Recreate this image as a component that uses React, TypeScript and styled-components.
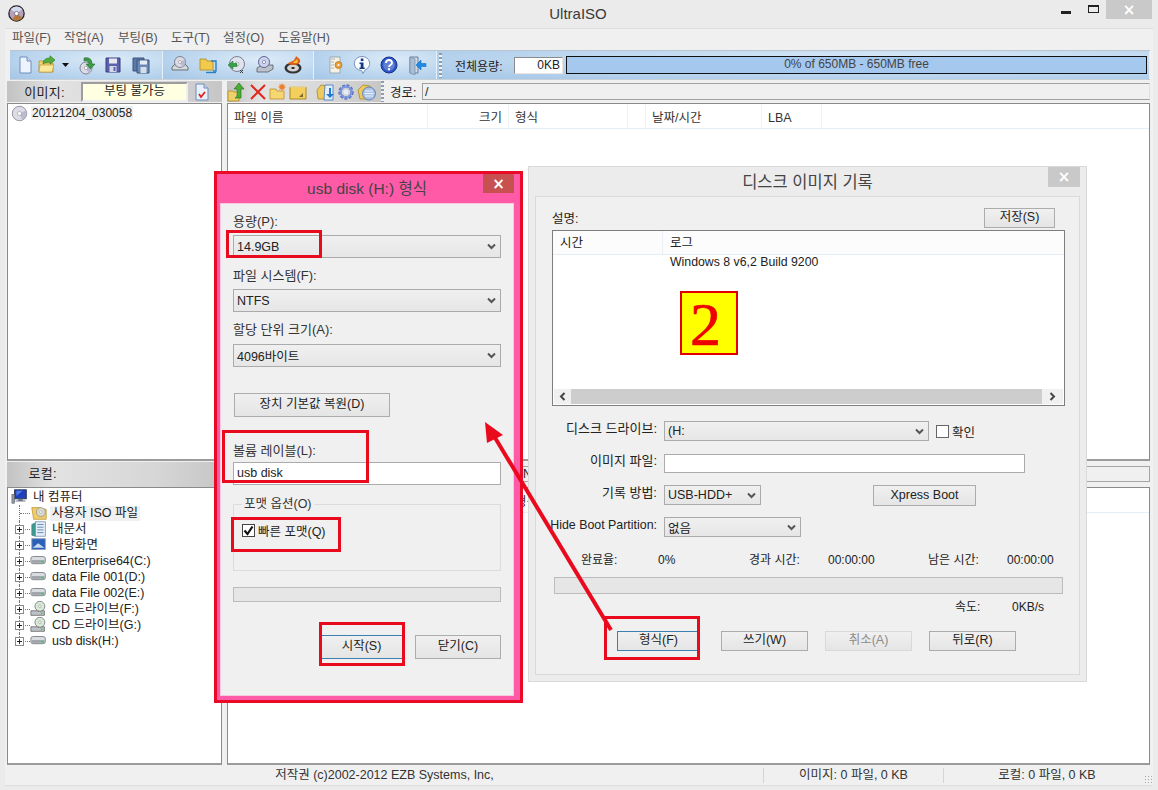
import React from "react";
import styled, { createGlobalStyle } from "styled-components";

const Global = createGlobalStyle`
  html, body { margin: 0; padding: 0; background: #ebebeb; }
  body { font-family: "Liberation Sans", "Noto Sans CJK KR", sans-serif; font-size: 13px; color: #222; }
  * { box-sizing: border-box; }
`;

const Page = styled.div`
  position: relative; width: 1158px; height: 790px; overflow: hidden;
  background: #ebebeb; display: flex; flex-direction: column;
`;

/* ---------- title bar ---------- */
const TitleBar = styled.header`
  height: 28px; display: grid; grid-template-columns: 1fr auto 1fr; padding: 0 6px 0 4px; flex: none;
`;
const TitleIconBox = styled.div` padding: 5px 0 0 4px; line-height: 0; `;
const TitleText = styled.div` font-size: 15px; line-height: 27px; color: #3a3a3a; `;
const WinControls = styled.div` display: flex; justify-content: flex-end; align-items: flex-start; `;
const MinBtn = styled.div` width: 10px; height: 3px; background: #222; margin: 11px 17px 0 0; `;
const MaxBtn = styled.div` width: 11px; height: 8px; border: 1px solid #222; border-top-width: 2px; margin: 5px 7px 0 0; `;
const CloseBtn = styled.div<{ $w: number; $h: number; $bg: string }>`
  width: ${p => p.$w}px; height: ${p => p.$h}px; background: ${p => p.$bg};
  color: #fff; display: flex; align-items: center; justify-content: center;
  font: bold 15px "DejaVu Sans", sans-serif; flex: none;
`;

/* ---------- frame ---------- */
const Frame = styled.main`
  flex: 1; margin: 0 5px 5px; background: #f0f0f0; border-top: 1px solid #dedede;
  display: flex; flex-direction: column; box-shadow: 0 1px 0 #dcdcdc;
`;
const MenuBar = styled.nav` height: 20px; display: flex; flex: none; padding-left: 7px; `;
const MenuItem = styled.div<{ $w: number }>` width: ${p => p.$w}px; line-height: 19px; font-size: 12.5px; color: #555; `;

const Toolbar = styled.div`
  height: 30px; margin: 1px 3px 0 5px; display: flex; flex: none;
  border-top: 1px solid #b9c6d2; border-bottom: 1px solid #c8d0d8; background: #b9d4ee;
`;
const ToolSection = styled.div<{ $w?: number; $pad: number }>`
  ${p => p.$w ? `width:${p.$w}px;flex:none;` : "flex:1;"}
  padding-left: ${p => p.$pad}px; display: flex; align-items: center; border-right: 1px solid #e8f0f7;
  background: radial-gradient(ellipse at 65% 30%, #dcebf7 0, #c2daf0 45%, #a4c6e7 100%);
`;
const Slot = styled.div<{ $w: number }>`
  width: ${p => p.$w}px; flex: none; display: flex; align-items: center; justify-content: center; line-height: 0;
`;
const Grip = styled.div<{ $h: number }>`
  width: 3px; height: ${p => p.$h}px; flex: none;
  background: repeating-linear-gradient(180deg, #8f9cab 0 2px, #eef3f8 2px 4px);
`;
const CapLabel = styled.div` margin-left: 13px; font-size: 12px; color: #222; width: 59px; white-space: nowrap; `;
const CapValue = styled.div`
  width: 49px; height: 17px; background: #fff; border: 1px solid #8b8b8b; border-right-color: #e6e6e6; border-bottom-color: #e6e6e6;
  text-align: right; font-size: 12px; line-height: 15px; padding-right: 2px; color: #222;
`;
const CapBar = styled.div`
  flex: 1; height: 18px; margin: 0 2px 0 3px; background: #a5c8ee; border: 1px solid #111;
  text-align: center; font-size: 12px; line-height: 14px; color: #444;
`;

const InfoRow = styled.div<{ $h: number; $mt: number }>`
  height: ${p => p.$h}px; margin-top: ${p => p.$mt}px; flex: none; display: grid; grid-template-columns: 215px 1fr; column-gap: 5px; padding: 0 3px 0 2px;
`;
const GrayBar = styled.div<{ $w?: number }>`
  ${p => p.$w ? `width:${p.$w}px;flex:none;` : ""}
  background: linear-gradient(90deg, #c2c2c2 0, #e2e2e2 22%, #d6d6d6 70%, #c6c6c6 100%);
  display: flex; align-items: center; height: 100%;
`;
const BarLabel = styled.div<{ $w: number; $pb?: number }>`
  width: ${p => p.$w}px; flex: none; text-align: right; font-size: 13px; color: #222; letter-spacing: .3px; padding: 0 4px ${p => p.$pb ?? 0}px 0;
`;
const BootBox = styled.div`
  width: 107px; height: 20px; flex: none; margin-left: 12px; background: #ffffe1; border: 2px solid #9d9d9d; border-right-color: #eee; border-bottom-color: #eee;
  text-align: center; font-size: 12.5px; line-height: 14px; color: #222;
`;
const RightRow = styled.div` display: flex; align-items: center; height: 100%; `;
const PathLabel = styled.div` margin-left: 6px; font-size: 12.5px; width: 32px; flex: none; color: #222; `;
const PathField = styled.div`
  flex: 1; height: 17px; border: 1px solid #a0a0a0; border-right-color: #e0e0e0; background: #f0f0f0; font-size: 12.5px; line-height: 16px; padding-left: 2px; color: #222;
`;
const PlainPath = styled.div`
  height: 16px; margin-top: 4px; border: 1px solid #a5a5a5; border-left: none; background: #f0f0f0; padding-left: 296px; font: 12px/15px "Liberation Sans", sans-serif;
`;

const PaneRow = styled.section<{ $h: number; $mt: number }>`
  height: ${p => p.$h}px; margin-top: ${p => p.$mt}px; flex: none; display: grid; grid-template-columns: 215px 1fr; column-gap: 5px; padding: 0 3px 0 2px;
`;
const Pane = styled.div`
  background: #fff; border-top: 1px solid #8a8a8a; border-left: 1px solid #8a8a8a; border-bottom: 2px solid #9b9b9b; border-right: 1px solid #8a8a8a; overflow: hidden;
`;
const DiscRow = styled.div` display: flex; align-items: center; height: 17px; padding: 1px 0 0 3px; `;
const Highlight = styled.span`
  background: #f0f0f0; margin-left: 3px; padding: 0 1px; font-size: 12px; line-height: 14px; color: #222; white-space: nowrap;
`;
const ListHead = styled.div`
  display: flex; height: 25px; border-bottom: 1px solid #e6eef6; background: #fff;
`;
const HeadCell = styled.div<{ $w: number; $right?: boolean }>`
  width: ${p => p.$w}px; flex: none; padding: 6px 6px 2px; border-right: 1px solid #eef2f7; font-size: 12.5px; line-height: 16px; color: #333;
  text-align: ${p => p.$right ? "right" : "left"}; white-space: nowrap;
`;

/* ---------- tree ---------- */
const Tree = styled.div` padding-top: 1px; `;
const TreeRowBox = styled.div` display: flex; align-items: center; height: 16px; position: relative; `;
const Connector = styled.div<{ $last?: boolean }>`
  width: 22px; height: 16px; flex: none; position: relative;
  &::before { content: ""; position: absolute; left: 11px; top: 0; height: ${p => p.$last ? 8 : 16}px; border-left: 1px dotted #777; }
  &::after { content: ""; position: absolute; left: 12px; top: 8px; width: 10px; border-top: 1px dotted #777; }
`;
const Expander = styled.div`
  position: absolute; left: 7px; top: 4px; width: 9px; height: 9px; border: 1px solid #8a8a8a; background: #fff; z-index: 1;
  &::before { content: ""; position: absolute; left: 1px; top: 3px; width: 5px; height: 1px; background: #223; }
  &::after { content: ""; position: absolute; left: 3px; top: 1px; width: 1px; height: 5px; background: #223; }
`;
const TreeIconBox = styled.div` width: 18px; flex: none; line-height: 0; `;
const RootSpace = styled.div` width: 3px; flex: none; `;
const TreeLabel = styled.span<{ $sel?: boolean }>`
  margin-left: 2px; padding: 0 2px; font-size: 12.5px; line-height: 15px; color: #222; white-space: nowrap; background: ${p => p.$sel ? "#f0f0f0" : "transparent"};
`;

/* ---------- status ---------- */
const StatusBar = styled.footer`
  flex: 1; display: grid; grid-template-columns: 758px 180px 1fr; padding: 3px 3px 2px 1px; align-items: stretch;
`;
const StatusCell = styled.div<{ $sep?: boolean }>`
  text-align: center; font-size: 12.5px; line-height: 14px; color: #333; border-right: ${p => p.$sep ? "1px solid #d5d5d5" : "none"}; position: relative;
`;
const ResizeGrip = styled.div`
  position: absolute; right: -2px; bottom: 0; width: 8px; height: 8px;
  background: radial-gradient(circle, #aaa 0 1px, transparent 1px) 0 0 / 3px 3px;
`;

/* ---------- dialogs ---------- */
const FormatDialog = styled.div`
  position: absolute; left: 214px; top: 171px; width: 309px; height: 532px; background: #ff5aa8;
  border: 3px solid #ea0a28; padding: 0 6px 4px 3px; display: flex; flex-direction: column; z-index: 2;
`;
const DlgTitle = styled.div<{ $h: number }>`
  height: ${p => p.$h}px; flex: none; display: flex; align-items: flex-start; justify-content: flex-end; position: relative;
`;
const DlgCaption = styled.div<{ $left: number; $right: number; $top: number; $size: number }>`
  position: absolute; left: ${p => p.$left}px; right: ${p => p.$right}px; top: ${p => p.$top}px; text-align: center;
  font-size: ${p => p.$size}px; color: #444; white-space: nowrap;
`;
const FormatBody = styled.div`
  flex: 1; background: #f0f0f0; border: 1px solid #f7c9df; padding: 10px 12px 0 12px; display: flex; flex-direction: column; min-height: 0;
`;
const FieldLabel = styled.div<{ $mt?: number; $mb: number }>`
  margin-top: ${p => p.$mt ?? 0}px; margin-bottom: ${p => p.$mb}px; height: 16px; font-size: 13px; line-height: 16px; color: #333; white-space: nowrap;
`;
const SelectBox = styled.div<{ $w?: number; $h: number }>`
  ${p => p.$w ? `width:${p.$w}px;` : ""} height: ${p => p.$h}px; flex: none;
  border: 1px solid #ababab; background: linear-gradient(180deg, #f0f0f0, #e6e6e6);
  display: flex; align-items: center; justify-content: space-between; padding: 0 4px 0 3px; font-size: 12.5px; color: #222; white-space: nowrap;
`;
const Btn = styled.div<{ $w: number; $h: number; $ml?: number; $mt?: number; $focus?: boolean; $off?: boolean }>`
  width: ${p => p.$w}px; height: ${p => p.$h}px; flex: none; margin-left: ${p => p.$ml ?? 0}px; margin-top: ${p => p.$mt ?? 0}px;
  border: 1px solid ${p => p.$focus ? "#3c7fb1" : p.$off ? "#d9d9d9" : "#acacac"};
  background: linear-gradient(180deg, #f0f0f0, #e5e5e5);
  text-align: center; font-size: 12.5px; line-height: ${p => p.$h - 3}px; color: ${p => p.$off ? "#8c8c8c" : "#222"}; white-space: nowrap;
`;
const TextInput = styled.div<{ $w?: number; $h: number }>`
  ${p => p.$w ? `width:${p.$w}px;` : ""} height: ${p => p.$h}px; flex: none; background: #fff; border: 1px solid #ababab; padding-left: 3px;
  font-size: 12.5px; line-height: ${p => p.$h - 3}px; color: #222;
`;
const GroupBox = styled.fieldset`
  margin: 12px 0 0; padding: 0 0 0 8px; height: 74px; flex: none; border: 1px solid #dcdcdc; min-width: 0;
`;
const GroupLegend = styled.legend` font-size: 12.5px; color: #333; padding: 0 2px; margin-left: 0; line-height: 14px; `;
const CheckRow = styled.div` display: flex; align-items: center; margin-top: 10px; font-size: 12.5px; color: #222; `;
const CheckBox = styled.div`
  width: 13px; height: 13px; border: 1px solid #444; background: #fff; margin-right: 3px; line-height: 0; flex: none;
`;
const ProgressTrack = styled.div<{ $h: number; $mt: number; $ml?: number; $mr?: number }>`
  height: ${p => p.$h}px; margin: ${p => p.$mt}px ${p => p.$mr ?? 0}px 0 ${p => p.$ml ?? 0}px; flex: none; border: 1px solid #bcbcbc; background: #e6e6e6;
`;
const FormatButtons = styled.div` display: flex; justify-content: flex-end; gap: 12px; margin-top: 33px; `;

const BurnDialog = styled.div`
  position: absolute; left: 528px; top: 166px; width: 559px; height: 516px; background: #ececec;
  border: 1px solid #d9d9d9; padding: 0 6px 6px; display: flex; flex-direction: column; z-index: 1;
`;
const BurnBody = styled.div`
  flex: 1; background: #f0f0f0; border: 1px solid #dadada; display: flex; flex-direction: column; min-height: 0;
`;
const DescRow = styled.div`
  height: 33px; margin-left: 16px; margin-right: 24px; padding-top: 11px; display: flex; justify-content: space-between; font-size: 12.5px; color: #222; flex: none;
`;
const LogList = styled.div`
  height: 176px; margin: 0 14px 0 16px; flex: none; border: 1px solid #7e7e7e; background: #fff; display: flex; flex-direction: column;
`;
const LogHead = styled.div` height: 24px; flex: none; display: flex; border-bottom: 1px solid #e4edf6; background: #fcfcfc; `;
const LogHeadCell = styled.div<{ $w?: number }>`
  ${p => p.$w ? `width:${p.$w}px;border-right:1px solid #eaeff5;` : "flex:1;"} padding: 4px 7px 2px; font-size: 12.5px; line-height: 16px; color: #222;
`;
const LogBody = styled.div`
  flex: 1; padding: 0 0 0 117px; font-size: 12.3px; line-height: 15px; color: #222;
`;
const HScroll = styled.div`
  height: 15px; margin: 0 1px 1px; display: grid; grid-template-columns: 17px 1fr 21px; flex: none; background: #f0f0f0;
`;
const ScrollArrow = styled.div` display: flex; align-items: center; justify-content: center; line-height: 0; `;
const ScrollThumb = styled.div` background: #cdcdcd; `;
const FormGrid = styled.div`
  margin-top: 15px; display: grid; grid-template-columns: 121px 1fr; column-gap: 7px; row-gap: 12px; align-items: center; flex: none;
`;
const FormLabel = styled.div<{ $size?: number }>`
  text-align: right; font-size: ${p => p.$size ?? 13}px; color: #222; white-space: nowrap; line-height: 16px; padding-bottom: 4px;
`;
const FormCtl = styled.div<{ $gap?: number }>` display: flex; align-items: center; height: 20px; gap: ${p => p.$gap ?? 0}px; `;
const SmallCheck = styled.div` width: 13px; height: 13px; border: 1px solid #666; background: #fff; flex: none; `;
const SmallCheckLabel = styled.span` font-size: 12.5px; color: #222; margin-left: -4px; `;
const StatsRow = styled.div`
  margin-top: 15px; height: 16px; padding-left: 45px; display: grid; grid-template-columns: 77px 91px 79px 100px 79px 1fr; font-size: 12px; line-height: 16px; color: #222; flex: none; white-space: nowrap;
`;
const SpeedRow = styled.div`
  margin-top: 5px; height: 16px; padding-left: 419px; display: grid; grid-template-columns: 57px 1fr; font-size: 12px; line-height: 16px; color: #222; flex: none;
`;
const BurnButtons = styled.div` display: flex; margin-top: 16px; padding-left: 81px; flex: none; `;

/* ---------- annotations ---------- */
const RedRect = styled.div<{ $x: number; $y: number; $w: number; $h: number }>`
  position: absolute; left: ${p => p.$x}px; top: ${p => p.$y}px; width: ${p => p.$w}px; height: ${p => p.$h}px;
  border: 3px solid #ea0a1e; z-index: 3; pointer-events: none;
`;
const NumberBadge = styled.div`
  position: absolute; left: 680px; top: 291px; width: 58px; height: 64px; background: #ffff00; border: 2px solid #e00000;
  color: #ee0000; font: 62px/62px "Liberation Serif", serif; text-align: center; padding-right: 7px; z-index: 3;
  -webkit-text-stroke: .7px #ee0000;
`;
const ArrowLayer = styled.svg`
  position: absolute; left: 0; top: 0; width: 1158px; height: 790px; z-index: 4; pointer-events: none;
`;

/* ---------- icons ---------- */
type IP = { children: React.ReactNode; s?: number };
const I = ({ children, s = 20 }: IP) => <svg width={s} height={s} viewBox="0 0 20 20">{children}</svg>;
const Folder = ({ c = "#f3d36b" }: { c?: string }) => (
  <g><path d="M2 6h6l1 2h7v9H2z" fill={c} stroke="#b8922c" strokeWidth=".8" /><path d="M3 10h14l-2 7H2z" fill="#fbe89c" stroke="#b8922c" strokeWidth=".6" /></g>
);
const Disc = ({ cx = 10, cy = 10, r = 7 }: { cx?: number; cy?: number; r?: number }) => (
  <g><circle cx={cx} cy={cy} r={r} fill="#dcdce6" stroke="#6c6c7c" strokeWidth=".8" /><path d={`M${cx} ${cy}L${cx + r * .9} ${cy - r * .4}A${r} ${r} 0 0 1 ${cx + r * .4} ${cy + r * .9}Z`} fill="#b9b9d2" /><circle cx={cx} cy={cy} r={r * .28} fill="#fff" stroke="#888" strokeWidth=".6" /></g>
);
const Drive = ({ y = 11 }: { y?: number }) => (
  <g><path d={`M2 ${y + 1}l3-3h10l3 3v3H2z`} fill="#c4c8cf" stroke="#5e6268" strokeWidth=".8" /><path d={`M3 ${y + 2}h14`} stroke="#eef0f3" /></g>
);
const GreenArrow = () => <path d="M6 9C6 4 10 3 13 3V0.8L18 5l-5 4.2V7C10 7 8 8 6 9z" fill="#52ad3c" stroke="#2c7a20" strokeWidth=".6" />;

const IconNew = () => <I><path d="M5 2h7l4 4v12H5z" fill="#eef4fd" stroke="#6f8dbd" /><path d="M12 2v4h4" fill="#cfdcf0" stroke="#6f8dbd" /></I>;
const IconOpen = () => <I><Folder /><GreenArrow /></I>;
const IconExtract = () => <I><Disc cx={9} cy={13} r={6} /><path d="M7 3c5-1 8 1 8 6h3l-4.5 5L9 9h3c0-2-2-4-5-3z" fill="#3f9a46" stroke="#1f6c2a" strokeWidth=".6" /></I>;
const IconSave = () => <I><path d="M3 3h14v14H3z" fill="#5b62ad" stroke="#3a3f80" /><rect x="6" y="3.500" width="8" height="5" fill="#e8e8f2" /><rect x="6.500" y="11" width="7" height="6" fill="#d6d8e8" /><rect x="10.500" y="12" width="2" height="4" fill="#5b62ad" /></I>;
const IconSaveAll = () => <I><path d="M2 3h11v13H2z" fill="#5c7aa8" stroke="#3d557c" /><path d="M6 5h12v13H6z" fill="#6a88b8" stroke="#3d557c" /><rect x="9" y="5.500" width="7" height="4" fill="#e6ecf4" /><rect x="9.500" y="12" width="6" height="6" fill="#d6dee8" /></I>;
const IconDriveDisc = () => <I><Drive y={11} /><Disc cx={10} cy={7} r={5.500} /></I>;
const IconFolderScreen = () => <I><path d="M2 4h6l1 2h6v9H2z" fill="#f1c94d" stroke="#a98a25" strokeWidth=".8" /><path d="M13 6h5v10h-3" fill="none" stroke="#2a7fc4" strokeWidth="1.400" /><path d="M8 17.500h10" stroke="#2a7fc4" strokeWidth="1.400" /></I>;
const IconGlobeDisc = () => <I><circle cx="10" cy="9" r="7.500" fill="#dfe3ee" stroke="#667" strokeWidth=".8" /><circle cx="10" cy="9" r="2" fill="#fff" stroke="#888" strokeWidth=".6" /><path d="M1 10l5-4v2.500h4v3H6V14z" fill="#38a24a" stroke="#1f6e2b" strokeWidth=".5" /><path d="M13 15l3 3m-3 0l3-3" stroke="#333" /></I>;
const IconScanner = () => <I><path d="M2 13l5-3h11v4l-5 3H2z" fill="#bcc2cc" stroke="#555a63" strokeWidth=".8" /><circle cx="9" cy="7" r="5.500" fill="#cfd4ee" stroke="#54598c" strokeWidth=".9" /><circle cx="9" cy="7" r="1.600" fill="#fff" stroke="#54598c" strokeWidth=".6" /></I>;
const IconBurn = () => <I><ellipse cx="10" cy="13" rx="8.500" ry="5.500" fill="#333" /><ellipse cx="10" cy="13" rx="6" ry="3.500" fill="#d5d5d5" /><ellipse cx="10" cy="13" rx="1.800" ry="1.100" fill="#222" /><path d="M5 9c1-3 5-2 6-4 1-2 2-3 2-4 2 2 5 3 4 6-1 3-6 4-12 2z" fill="#e0601a" /><path d="M10 8c1-2 3-2 4-4 1 1 1 3 0 4z" fill="#f7c335" /></I>;
const IconNoteGear = () => <I><path d="M4 2h10v16H4z" fill="#f6f2e2" stroke="#8e9bb0" strokeWidth=".8" /><path d="M5 4h4M5 7h3M5 10h3M5 13h3" stroke="#a8b4c6" /><circle cx="12.500" cy="10" r="3.500" fill="#e8a03a" stroke="#a8681a" strokeWidth=".6" /><circle cx="12.500" cy="10" r="1" fill="#fff" /></I>;
const IconInfo = () => <I><path d="M10 1.500a7.500 7 0 0 1 3 13.500l-2 3.500-1.500-3a7.500 7 0 0 1 .5-14z" fill="#f8fbff" stroke="#7d92b8" /><rect x="8.800" y="3.500" width="2.600" height="2.600" fill="#123a8c" /><path d="M7.500 7.500h4v5h1.200v1.500H7.500v-1.500h1.200V9H7.500z" fill="#123a8c" /></I>;
const IconHelp = () => <I><circle cx="10" cy="10" r="8" fill="#2e56c4" stroke="#16308a" /><circle cx="10" cy="10" r="5.800" fill="#fff" opacity=".25" /><path d="M7 8c0-4 6-4 6 0 0 2-3 2-3 4" fill="none" stroke="#fff" strokeWidth="1.800" /><rect x="9" y="13.200" width="2" height="2" fill="#fff" /></I>;
const IconExit = () => <I><path d="M3 2h8v16H3z" fill="#cdd9e8" stroke="#6c7f98" /><path d="M3 2l5 2v16l-5-2z" fill="#a9bdd6" stroke="#6c7f98" strokeWidth=".6" /><path d="M19 8.500h-5V5l-5 5 5 5v-3.500h5z" fill="#1e8bea" stroke="#0f62b3" strokeWidth=".5" /></I>;
const IconChecked = () => <I><path d="M4 2h8l4 4v12H4z" fill="#e9f0fb" stroke="#6f8dbd" /><path d="M12 2v4h4" fill="#c9d7ee" stroke="#6f8dbd" /><path d="M7 12l2 3 4-5" fill="none" stroke="#d9261c" strokeWidth="1.800" /></I>;
const IconUp = () => <I><path d="M1 9h5l1 1h5v9H1z" fill="#f0d06a" stroke="#a98a25" strokeWidth=".8" /><path d="M12 1l5 6h-3v9H8c3-1 2-5 2-9H7z" fill="#4aaa3a" stroke="#27781f" strokeWidth=".7" /></I>;
const IconDel = () => <I><path d="M3 3l14 14M17 3L3 17" stroke="#e0281c" strokeWidth="2" /></I>;
const IconNewFolder = () => <I><path d="M2 7h6l1 2h7v8H2z" fill="#f5d671" stroke="#b8922c" strokeWidth=".8" /><path d="M14 1l1 2 2-1-1 2 2 1-2 1 1 2-2-1-1 2-1-2-2 1 1-2-2-1 2-1-1-2 2 1z" fill="#ef7f2a" /></I>;
const IconProps = () => <I><path d="M2 5h16v12H2z" fill="#f4cf5e" stroke="#a98a25" /><path d="M11 15l4-4v4z" fill="#7a6a2c" /><path d="M2 5h16" stroke="#fff1b8" /></I>;
const IconFolderDoc = () => <I><path d="M1 8l4-5 6 1v13H2z" fill="#f0c95c" stroke="#a98a25" strokeWidth=".8" /><path d="M9 3h8v15H8z" fill="#e3effb" stroke="#3f74b8" strokeWidth=".8" /><path d="M13 6v6h-3l4 4 4-4h-3V6z" fill="#1f7ad1" /></I>;
const IconGear = () => <I><circle cx="10" cy="10" r="6" fill="none" stroke="#5874c4" strokeWidth="3.400" strokeDasharray="2.600 1.400" /><circle cx="10" cy="10" r="5.500" fill="none" stroke="#7a96dc" strokeWidth="2" /><circle cx="10" cy="10" r="2.500" fill="#e4ecfa" /></I>;
const IconFolderDisc = () => <I><path d="M1 8l5-5 7 1v13H3z" fill="#f0c95c" stroke="#a98a25" strokeWidth=".8" /><circle cx="12" cy="11.500" r="6.500" fill="#a9c3e6" stroke="#4b72ab" strokeWidth=".8" /><path d="M8 9h8M7.500 11.500h9M8 14h8" stroke="#eaf2fb" /></I>;
const IconApp = () => <svg width="17" height="17" viewBox="0 0 20 20"><circle cx="10" cy="10" r="9" fill="#b99fbb" stroke="#222" strokeWidth="1.500" /><path d="M10 10L3 5A9 9 0 0 1 17 5z" fill="#d3d9ee" /><path d="M10 10L17 15A9 9 0 0 1 5 17z" fill="#b5773c" /><circle cx="10" cy="10" r="2.500" fill="#fff" stroke="#555" strokeWidth=".8" /></svg>;
const IconPC = () => <I s={18}><rect x="4" y="2" width="13" height="10" fill="#1c3fbe" stroke="#27324d" /><path d="M6 3l7 0-7 6z" fill="#4f7be8" /><path d="M8 12v2h-3v1h11v-1h-3v-2z" fill="#6e7786" /><rect x="1" y="7" width="3" height="10" fill="#8f98a8" stroke="#444" strokeWidth=".5" /></I>;
const IconUserISO = () => <I s={18}><path d="M2 4h8l8 2v11H4z" fill="#f2cc68" stroke="#b8922c" strokeWidth=".8" /><circle cx="12" cy="9" r="5" fill="#d8d8d2" stroke="#8b8b70" strokeWidth=".7" /><circle cx="12" cy="9" r="1.400" fill="#fff" stroke="#888" strokeWidth=".5" /></I>;
const IconDocs = () => <I s={18}><path d="M2 5l4-2v15l-4-1z" fill="#3f9c8e" stroke="#2b6c7c" strokeWidth=".6" /><rect x="6" y="2" width="11" height="16" fill="#e6eef8" stroke="#6885a8" strokeWidth=".8" /><path d="M8 5h7M8 8h7M8 11h7M8 14h7" stroke="#5b86b4" /></I>;
const IconDesk = () => <I s={18}><rect x="2" y="3" width="15" height="12" fill="#2c5fb8" stroke="#8ca0bd" /><path d="M3 13l6-5 7 5z" fill="#c6dcf4" /></I>;
const IconHdd = () => <I s={18}><path d="M1 7q0-2 3-2h10q3 0 3 2v4q0 2-3 2H4q-3 0-3-2z" fill="#d9dce0" stroke="#5d6168" strokeWidth=".8" /><rect x="2" y="9" width="14" height="3" fill="#9ea3aa" /><rect x="13" y="10" width="2" height="1.500" fill="#3fc04a" /></I>;
const IconCD = () => <I s={18}><path d="M1 12h15v5H1z" fill="#bfc3c9" stroke="#555" strokeWidth=".8" /><rect x="12" y="14" width="2" height="1.400" fill="#3fc04a" /><circle cx="11" cy="7" r="5.500" fill="#d9ead4" stroke="#667" strokeWidth=".8" /><circle cx="11" cy="7" r="1.500" fill="#fff" stroke="#777" strokeWidth=".5" /></I>;
const IconCdSmall = () => <svg width="17" height="17" viewBox="0 0 20 20"><Disc cx={10} cy={10} r={8.500} /></svg>;
const Chevron = () => <svg width="9" height="7" viewBox="0 0 9 7"><path d="M1 1.500l3.500 3.500L8 1.500" fill="none" stroke="#555" strokeWidth="2" /></svg>;
const ScrollChevron = ({ left }: { left?: boolean }) => <svg width="7" height="9" viewBox="0 0 7 9"><path d={left ? "M5.500 1L2 4.500 5.500 8" : "M1.500 1L5 4.500 1.500 8"} fill="none" stroke="#444" strokeWidth="2" /></svg>;
const CheckMark = () => <svg width="11" height="11" viewBox="0 0 11 11"><path d="M1.500 5.500l3 3.500 5-7.500" fill="none" stroke="#111" strokeWidth="2.200" /></svg>;
const DropCaret = () => <svg width="7" height="4" viewBox="0 0 7 4"><path d="M0 0h7L3.500 4z" fill="#111" /></svg>;

const Select = ({ text, w, h }: { text: string; w?: number; h: number }) => (
  <SelectBox $w={w} $h={h}><span>{text}</span><Chevron /></SelectBox>
);

const TreeItem = ({ icon, label, exp = true, sel, last }: { icon: React.ReactNode; label: string; exp?: boolean; sel?: boolean; last?: boolean }) => (
  <TreeRowBox>
    <Connector $last={last}>{exp && <Expander />}</Connector>
    <TreeIconBox>{icon}</TreeIconBox>
    <TreeLabel $sel={sel}>{label}</TreeLabel>
  </TreeRowBox>
);

export default function App() {
  return (
    <Page>
      <Global />
      <TitleBar>
        <TitleIconBox><IconApp /></TitleIconBox>
        <TitleText>UltraISO</TitleText>
        <WinControls>
          <MinBtn /><MaxBtn />
          <CloseBtn $w={46} $h={19} $bg="#c9c9c9">×</CloseBtn>
        </WinControls>
      </TitleBar>
      <Frame>
        <MenuBar>
          <MenuItem $w={52}>파일(F)</MenuItem>
          <MenuItem $w={54}>작업(A)</MenuItem>
          <MenuItem $w={53}>부팅(B)</MenuItem>
          <MenuItem $w={52}>도구(T)</MenuItem>
          <MenuItem $w={55}>설정(O)</MenuItem>
          <MenuItem $w={60}>도움말(H)</MenuItem>
        </MenuBar>
        <Toolbar>
          <ToolSection $w={153} $pad={4}>
            <Slot $w={22}><IconNew /></Slot><Slot $w={22}><IconOpen /></Slot><Slot $w={14}><DropCaret /></Slot>
            <Slot $w={30}><IconExtract /></Slot><Slot $w={22}><IconSave /></Slot><Slot $w={34}><IconSaveAll /></Slot>
          </ToolSection>
          <ToolSection $w={151} $pad={3}>
            <Slot $w={28}><IconDriveDisc /></Slot><Slot $w={28}><IconFolderScreen /></Slot><Slot $w={30}><IconGlobeDisc /></Slot>
            <Slot $w={26}><IconScanner /></Slot><Slot $w={30}><IconBurn /></Slot>
          </ToolSection>
          <ToolSection $w={123} $pad={9}>
            <Slot $w={26}><IconNoteGear /></Slot><Slot $w={26}><IconInfo /></Slot><Slot $w={28}><IconHelp /></Slot><Slot $w={28}><IconExit /></Slot>
          </ToolSection>
          <ToolSection $pad={2}>
            <Grip $h={25} />
            <CapLabel>전체용량:</CapLabel>
            <CapValue>0KB</CapValue>
            <CapBar>0% of 650MB - 650MB free</CapBar>
          </ToolSection>
        </Toolbar>
        <InfoRow $h={21} $mt={1}>
          <GrayBar>
            <BarLabel $w={62}>이미지:</BarLabel>
            <BootBox>부팅 불가능</BootBox>
            <Slot $w={28}><IconChecked /></Slot>
          </GrayBar>
          <RightRow>
            <GrayBar $w={154}>
              <Slot $w={20}><IconUp /></Slot><Slot $w={21}><IconDel /></Slot><Slot $w={20}><IconNewFolder /></Slot><Slot $w={20}><IconProps /></Slot>
              <Slot $w={7} />
              <Slot $w={21}><IconFolderDoc /></Slot><Slot $w={20}><IconGear /></Slot><Slot $w={21}><IconFolderDisc /></Slot>
            </GrayBar>
            <Grip $h={21} />
            <PathLabel>경로:</PathLabel>
            <PathField>/</PathField>
          </RightRow>
        </InfoRow>
        <PaneRow $h={358} $mt={1}>
          <Pane>
            <DiscRow><IconCdSmall /><Highlight>20121204_030058</Highlight></DiscRow>
          </Pane>
          <Pane>
            <ListHead>
              <HeadCell $w={200}>파일 이름</HeadCell>
              <HeadCell $w={81} $right>크기</HeadCell>
              <HeadCell $w={119}>형식</HeadCell>
              <HeadCell $w={18} />
              <HeadCell $w={116}>날짜/시간</HeadCell>
              <HeadCell $w={60}>LBA</HeadCell>
            </ListHead>
          </Pane>
        </PaneRow>
        <InfoRow $h={25} $mt={1}>
          <GrayBar><BarLabel $w={54} $pb={5}>로컬:</BarLabel></GrayBar>
          <PlainPath>N</PlainPath>
        </InfoRow>
        <PaneRow $h={278} $mt={0}>
          <Pane>
            <Tree>
              <TreeRowBox><RootSpace /><TreeIconBox><IconPC /></TreeIconBox><TreeLabel>내 컴퓨터</TreeLabel></TreeRowBox>
              <TreeItem icon={<IconUserISO />} label="사용자 ISO 파일" exp={false} sel />
              <TreeItem icon={<IconDocs />} label="내문서" />
              <TreeItem icon={<IconDesk />} label="바탕화면" />
              <TreeItem icon={<IconHdd />} label="8Enterprise64(C:)" />
              <TreeItem icon={<IconHdd />} label="data File 001(D:)" />
              <TreeItem icon={<IconHdd />} label="data File 002(E:)" />
              <TreeItem icon={<IconCD />} label="CD 드라이브(F:)" />
              <TreeItem icon={<IconCD />} label="CD 드라이브(G:)" />
              <TreeItem icon={<IconHdd />} label="usb disk(H:)" last />
            </Tree>
          </Pane>
          <Pane>
            <ListHead>
              <HeadCell $w={200} />
              <HeadCell $w={81} />
              <HeadCell $w={119}>형식</HeadCell>
            </ListHead>
          </Pane>
        </PaneRow>
        <StatusBar>
          <StatusCell $sep>저작권 (c)2002-2012 EZB Systems, Inc,</StatusCell>
          <StatusCell $sep>이미지: 0 파일, 0 KB</StatusCell>
          <StatusCell>로컬: 0 파일, 0 KB<ResizeGrip /></StatusCell>
        </StatusBar>
      </Frame>

      <BurnDialog>
        <DlgTitle $h={29}>
          <DlgCaption $left={0} $right={0} $top={2} $size={16.5}>디스크 이미지 기록</DlgCaption>
          <CloseBtn $w={32} $h={20} $bg="#c9c9c9">×</CloseBtn>
        </DlgTitle>
        <BurnBody>
          <DescRow>
            <span>설명:</span>
            <Btn $w={71} $h={20} $mt={0}>저장(S)</Btn>
          </DescRow>
          <LogList>
            <LogHead><LogHeadCell $w={110}>시간</LogHeadCell><LogHeadCell>로그</LogHeadCell></LogHead>
            <LogBody>Windows 8 v6,2 Build 9200</LogBody>
            <HScroll>
              <ScrollArrow><ScrollChevron left /></ScrollArrow>
              <ScrollThumb />
              <ScrollArrow><ScrollChevron /></ScrollArrow>
            </HScroll>
          </LogList>
          <FormGrid>
            <FormLabel>디스크 드라이브:</FormLabel>
            <FormCtl $gap={7}><Select text="(H:" w={265} h={20} /><SmallCheck /><SmallCheckLabel>확인</SmallCheckLabel></FormCtl>
            <FormLabel>이미지 파일:</FormLabel>
            <FormCtl><TextInput $w={361} $h={19} /></FormCtl>
            <FormLabel>기록 방법:</FormLabel>
            <FormCtl><Select text="USB-HDD+" w={97} h={20} /><Btn $w={103} $h={21} $ml={112}>Xpress Boot</Btn></FormCtl>
            <FormLabel $size={12.4}>Hide Boot Partition:</FormLabel>
            <FormCtl><Select text="없음" w={137} h={20} /></FormCtl>
          </FormGrid>
          <StatsRow>
            <span>완료율:</span><span>0%</span><span>경과 시간:</span><span>00:00:00</span><span>남은 시간:</span><span>00:00:00</span>
          </StatsRow>
          <ProgressTrack $h={17} $mt={9} $ml={18} $mr={16} />
          <SpeedRow><span>속도:</span><span>0KB/s</span></SpeedRow>
          <BurnButtons>
            <Btn $w={83} $h={20} $focus>형식(F)</Btn>
            <Btn $w={87} $h={20} $ml={21}>쓰기(W)</Btn>
            <Btn $w={87} $h={20} $ml={17} $off>취소(A)</Btn>
            <Btn $w={87} $h={20} $ml={17}>뒤로(R)</Btn>
          </BurnButtons>
        </BurnBody>
      </BurnDialog>

      <FormatDialog>
        <DlgTitle $h={29}>
          <DlgCaption $left={0} $right={0} $top={2} $size={15.5}>usb disk (H:) 형식</DlgCaption>
          <CloseBtn $w={31} $h={19} $bg="#c75050">×</CloseBtn>
        </DlgTitle>
        <FormatBody>
          <FieldLabel $mb={5}>용량(P):</FieldLabel>
          <Select text="14.9GB" h={23} />
          <FieldLabel $mt={10} $mb={5}>파일 시스템(F):</FieldLabel>
          <Select text="NTFS" h={23} />
          <FieldLabel $mt={10} $mb={6}>할당 단위 크기(A):</FieldLabel>
          <Select text="4096바이트" h={23} />
          <Btn $w={156} $h={24} $ml={1} $mt={26}>장치 기본값 복원(D)</Btn>
          <FieldLabel $mt={26} $mb={3}>볼륨 레이블(L):</FieldLabel>
          <TextInput $h={23}>usb disk</TextInput>
          <GroupBox>
            <GroupLegend>포맷 옵션(O)</GroupLegend>
            <CheckRow><CheckBox><CheckMark /></CheckBox>빠른 포맷(Q)</CheckRow>
          </GroupBox>
          <ProgressTrack $h={15} $mt={16} />
          <FormatButtons>
            <Btn $w={83} $h={24} $focus>시작(S)</Btn>
            <Btn $w={86} $h={24}>닫기(C)</Btn>
          </FormatButtons>
        </FormatBody>
      </FormatDialog>

      <RedRect $x={226} $y={230} $w={96} $h={28} />
      <RedRect $x={222} $y={430} $w={147} $h={53} />
      <RedRect $x={231} $y={517} $w={110} $h={35} />
      <RedRect $x={319} $y={622} $w={86} $h={44} />
      <RedRect $x={604} $y={616} $w={96} $h={44} />
      <NumberBadge>2</NumberBadge>
      <ArrowLayer viewBox="0 0 1158 790">
        <path d="M611 630L494 436" stroke="#ea0a1e" strokeWidth="4" fill="none" />
        <path d="M485 422L503 435L487 443Z" fill="#ea0a1e" />
      </ArrowLayer>
    </Page>
  );
}
